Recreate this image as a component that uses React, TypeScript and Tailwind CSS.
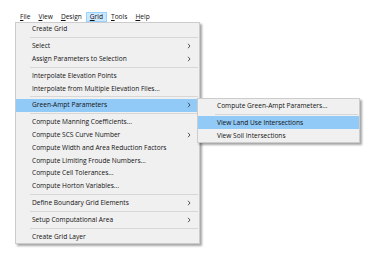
type Entry = { label: string; arrow?: boolean; active?: boolean } | "sep";

const gridMenu: Entry[] = [
  { label: "Create Grid" },
  "sep",
  { label: "Select", arrow: true },
  { label: "Assign Parameters to Selection", arrow: true },
  "sep",
  { label: "Interpolate Elevation Points" },
  { label: "Interpolate from Multiple Elevation Files..." },
  "sep",
  { label: "Green-Ampt Parameters", arrow: true, active: true },
  "sep",
  { label: "Compute Manning Coefficients..." },
  { label: "Compute SCS Curve Number", arrow: true },
  { label: "Compute Width and Area Reduction Factors" },
  { label: "Compute Limiting Froude Numbers..." },
  { label: "Compute Cell Tolerances..." },
  { label: "Compute Horton Variables..." },
  "sep",
  { label: "Define Boundary Grid Elements", arrow: true },
  "sep",
  { label: "Setup Computational Area", arrow: true },
  "sep",
  { label: "Create Grid Layer" },
];

const greenAmpt: Entry[] = [
  { label: "Compute Green-Ampt Parameters..." },
  "sep",
  { label: "View Land Use Intersections", active: true },
  { label: "View Soil Intersections" },
];

const menuBar = ["File", "View", "Design", "Grid", "Tools", "Help"];

function Arrow() {
  return (
    <svg width="4" height="6" viewBox="0 0 4 6" className="shrink-0">
      <path d="M1 0.8 L3 3 L1 5.2" fill="none" stroke="#444" strokeWidth="0.9" />
    </svg>
  );
}

function MenuList({ items, textPad, sepPad }: { items: Entry[]; textPad: string; sepPad: string }) {
  return (
    <div className="flex flex-col">
      {items.map((it, i) =>
        it === "sep" ? (
          <div key={i} className={`h-[4px] flex items-center ${sepPad}`}>
            <div className="h-px w-full bg-[#d7d7d7]" />
          </div>
        ) : (
          <div
            key={i}
            className={`h-[12.8px] flex items-center justify-between pr-[8px] ${textPad} ${
              it.active ? "bg-[#91c9f7]" : ""
            }`}
          >
            <span className="whitespace-nowrap">{it.label}</span>
            {it.arrow && <Arrow />}
          </div>
        )
      )}
    </div>
  );
}

export default function App() {
  return (
    <div
      className="relative w-[369px] h-[256px] bg-white text-[6.6px] text-[#111] overflow-hidden"
      style={{ fontFamily: '"Open Sans", "Noto Sans", sans-serif' }}
    >
      <div className="flex pl-[16px] pt-[12px]">
        {menuBar.map((m) => (
          <div
            key={m}
            className={`h-[10px] px-[3px] flex items-center border ${
              m === "Grid" ? "bg-[#cce8ff] border-[#99d1ff]" : "border-transparent"
            }`}
          >
            <span>
              <span className="underline">{m[0]}</span>
              {m.slice(1)}
            </span>
          </div>
        ))}
      </div>

      <div className="ml-[15px] w-[185px] border border-[#cccccc] bg-[#f0f0f0] shadow-[2px_2px_2px_rgba(0,0,0,0.35)]">
        <MenuList items={gridMenu} textPad="pl-[16px]" sepPad="pl-[14px] pr-[1px]" />
      </div>

      <div className="absolute left-[197px] top-[98px] w-[163px] border border-[#cccccc] bg-[#f0f0f0] shadow-[2px_2px_2px_rgba(0,0,0,0.35)]">
        <div className="pt-[0.5px]">
          <MenuList items={greenAmpt} textPad="pl-[19px]" sepPad="pl-[17px] pr-[1px]" />
        </div>
      </div>
    </div>
  );
}
